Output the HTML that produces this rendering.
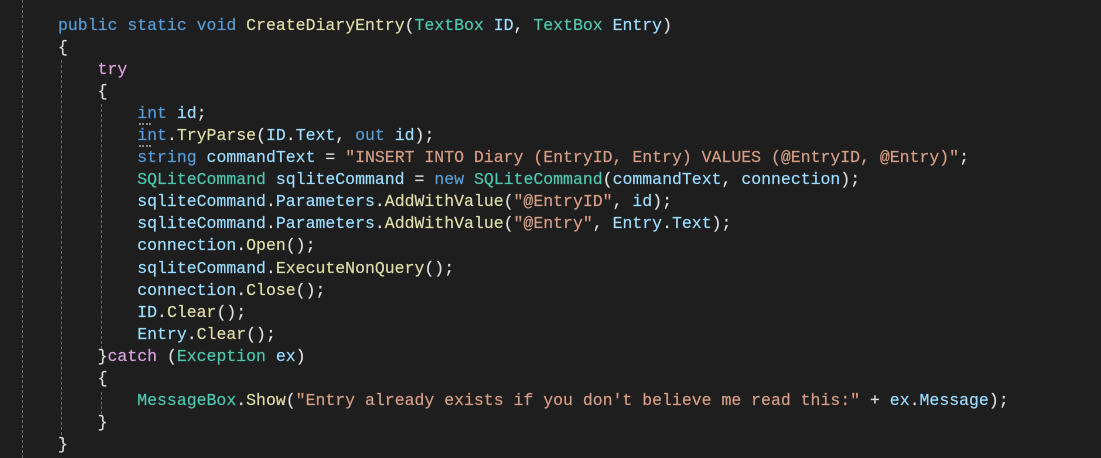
<!DOCTYPE html>
<html><head><meta charset="utf-8"><style>
html,body{margin:0;padding:0;background:#1e1e1e;width:1101px;height:458px;overflow:hidden;position:relative}
pre{position:absolute;left:58px;top:15px;margin:0;font-family:"Liberation Mono",monospace;font-size:16.5px;line-height:22.05px;color:#dcdcdc;white-space:pre;-webkit-text-stroke:0.2px}
.k{color:#569cd6}.c{color:#d8a0df}.t{color:#4ec9b0}.m{color:#dcdcaa}.v{color:#9cdcfe}.s{color:#d69d85}
.g{position:absolute;width:0;border-left:1px dashed #6a6a6a}
.d{position:absolute;height:0;border-top:2px dotted #888;width:12px}
</style></head><body>
<div class="g" style="left:22px;top:0;height:458px"></div>
<div class="g" style="left:61px;top:60px;height:380px"></div>
<div class="g" style="left:101px;top:104px;height:245px"></div>
<div class="g" style="left:101px;top:392px;height:22px"></div>
<div class="d" style="left:139px;top:123px"></div>
<div class="d" style="left:139px;top:145px"></div>
<pre><span class="k">public</span> <span class="k">static</span> <span class="k">void</span> <span class="m">CreateDiaryEntry</span>(<span class="t">TextBox</span> <span class="v">ID</span>, <span class="t">TextBox</span> <span class="v">Entry</span>)
{
    <span class="c">try</span>
    {
        <span class="k">int</span> <span class="v">id</span>;
        <span class="k">int</span>.<span class="m">TryParse</span>(<span class="v">ID</span>.<span class="v">Text</span>, <span class="k">out</span> <span class="v">id</span>);
        <span class="k">string</span> <span class="v">commandText</span> = <span class="s">"INSERT INTO Diary (EntryID, Entry) VALUES (@EntryID, @Entry)"</span>;
        <span class="t">SQLiteCommand</span> <span class="v">sqliteCommand</span> = <span class="k">new</span> <span class="t">SQLiteCommand</span>(<span class="v">commandText</span>, <span class="v">connection</span>);
        <span class="v">sqliteCommand</span>.<span class="v">Parameters</span>.<span class="m">AddWithValue</span>(<span class="s">"@EntryID"</span>, <span class="v">id</span>);
        <span class="v">sqliteCommand</span>.<span class="v">Parameters</span>.<span class="m">AddWithValue</span>(<span class="s">"@Entry"</span>, <span class="v">Entry</span>.<span class="v">Text</span>);
        <span class="v">connection</span>.<span class="m">Open</span>();
        <span class="v">sqliteCommand</span>.<span class="m">ExecuteNonQuery</span>();
        <span class="v">connection</span>.<span class="m">Close</span>();
        <span class="v">ID</span>.<span class="m">Clear</span>();
        <span class="v">Entry</span>.<span class="m">Clear</span>();
    }<span class="c">catch</span> (<span class="t">Exception</span> <span class="v">ex</span>)
    {
        <span class="t">MessageBox</span>.<span class="m">Show</span>(<span class="s">"Entry already exists if you don't believe me read this:"</span> + <span class="v">ex</span>.<span class="v">Message</span>);
    }
}</pre>
</body></html>
